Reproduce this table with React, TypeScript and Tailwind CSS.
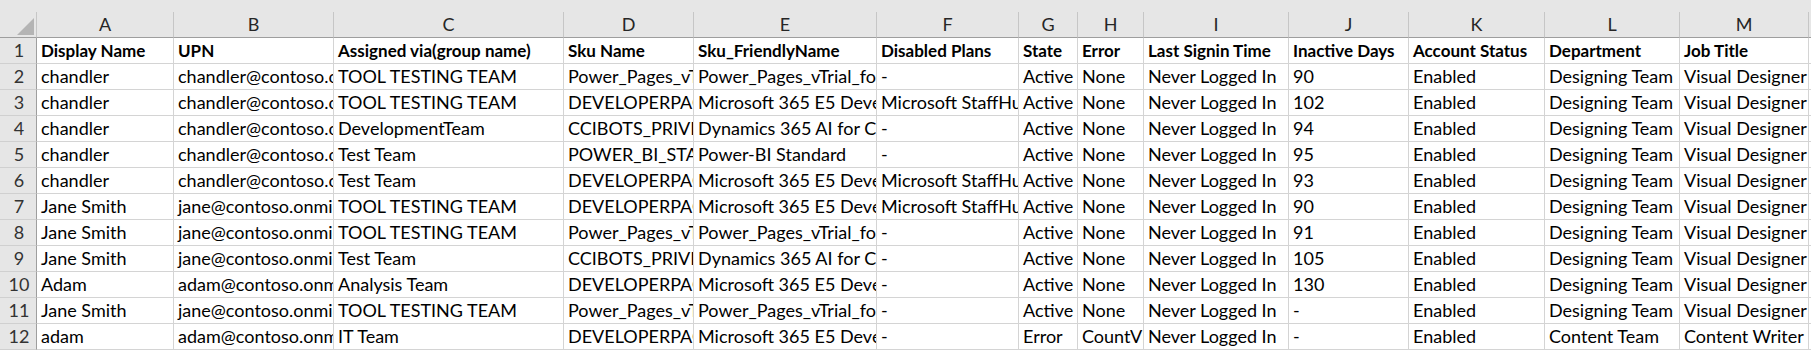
const LETTERS = ['A', 'B', 'C', 'D', 'E', 'F', 'G', 'H', 'I', 'J', 'K', 'L', 'M']

const HEADERS = [
  'Display Name',
  'UPN',
  'Assigned via(group name)',
  'Sku Name',
  'Sku_FriendlyName',
  'Disabled Plans',
  'State',
  'Error',
  'Last Signin Time',
  'Inactive Days',
  'Account Status',
  'Department',
  'Job Title',
]

const PAGES = 'Power_Pages_vTrial_for_Makers'
const DEV = 'DEVELOPERPACK_E5'
const DEV_NAME = 'Microsoft 365 E5 Developer (without Windows and Audio Conferencing)'
const BOTS = 'CCIBOTS_PRIVPREV_VIRAL'
const BOTS_NAME = 'Dynamics 365 AI for Customer Service Virtual Agents Viral'
const STAFFHUB = 'Microsoft StaffHub'
const CHANDLER = 'chandler@contoso.onmicrosoft.com'
const JANE = 'jane@contoso.onmicrosoft.com'
const ADAM = 'adam@contoso.onmicrosoft.com'
const NEVER = 'Never Logged In'

const ROWS: string[][] = [
  ['chandler', CHANDLER, 'TOOL TESTING TEAM', PAGES, PAGES, '-', 'Active', 'None', NEVER, '90', 'Enabled', 'Designing Team', 'Visual Designer'],
  ['chandler', CHANDLER, 'TOOL TESTING TEAM', DEV, DEV_NAME, STAFFHUB, 'Active', 'None', NEVER, '102', 'Enabled', 'Designing Team', 'Visual Designer'],
  ['chandler', CHANDLER, 'DevelopmentTeam', BOTS, BOTS_NAME, '-', 'Active', 'None', NEVER, '94', 'Enabled', 'Designing Team', 'Visual Designer'],
  ['chandler', CHANDLER, 'Test Team', 'POWER_BI_STANDARD', 'Power-BI Standard', '-', 'Active', 'None', NEVER, '95', 'Enabled', 'Designing Team', 'Visual Designer'],
  ['chandler', CHANDLER, 'Test Team', DEV, DEV_NAME, STAFFHUB, 'Active', 'None', NEVER, '93', 'Enabled', 'Designing Team', 'Visual Designer'],
  ['Jane Smith', JANE, 'TOOL TESTING TEAM', DEV, DEV_NAME, STAFFHUB, 'Active', 'None', NEVER, '90', 'Enabled', 'Designing Team', 'Visual Designer'],
  ['Jane Smith', JANE, 'TOOL TESTING TEAM', PAGES, PAGES, '-', 'Active', 'None', NEVER, '91', 'Enabled', 'Designing Team', 'Visual Designer'],
  ['Jane Smith', JANE, 'Test Team', BOTS, BOTS_NAME, '-', 'Active', 'None', NEVER, '105', 'Enabled', 'Designing Team', 'Visual Designer'],
  ['Adam', ADAM, 'Analysis Team', DEV, DEV_NAME, '-', 'Active', 'None', NEVER, '130', 'Enabled', 'Designing Team', 'Visual Designer'],
  ['Jane Smith', JANE, 'TOOL TESTING TEAM', PAGES, PAGES, '-', 'Active', 'None', NEVER, '-', 'Enabled', 'Designing Team', 'Visual Designer'],
  ['adam', ADAM, 'IT Team', DEV, DEV_NAME, '-', 'Error', 'CountViolation', NEVER, '-', 'Enabled', 'Content Team', 'Content Writer'],
]

// Excel clips text at the gridline unless the cell to the right is empty (col M here)
function Cell({ text, bold, last }: { text: string; bold?: boolean; last?: boolean }) {
  return (
    <div
      className={
        'h-[26px] border-r border-b border-[#d4d4d4] pl-[4px] leading-[25px] whitespace-nowrap ' +
        (last ? 'overflow-visible ' : 'overflow-hidden ') +
        (bold ? 'font-bold text-[17px]' : '')
      }
    >
      {text}
    </div>
  )
}

function RowHead({ n }: { n: number }) {
  return (
    <div className="h-[26px] bg-[#e6e6e6] border-r border-r-[#9e9e9e] border-b border-b-[#d0d0d0] pl-[2px] text-center leading-[25px] text-[#333]">
      {n}
    </div>
  )
}

export default function App() {
  return (
    <div className="w-[1811px] h-[350px] overflow-hidden bg-white font-['Lato',sans-serif] text-[18px] text-black">
      <div className="h-3 bg-[#e6e6e6]" />
      <div className="grid grid-cols-[37px_137px_160px_230px_130px_183px_142px_59px_66px_145px_120px_136px_135px_129px_1fr]">
        {/* corner */}
        <div className="h-[26px] bg-[#e6e6e6] border-r border-r-[#c6c6c6] border-b border-b-[#9e9e9e] flex items-end justify-end pr-[2px] pb-[2px]">
          <svg width="17" height="17" viewBox="0 0 17 17">
            <polygon points="0,17 17,0 17,17" fill="#b4b4b4" />
          </svg>
        </div>
        {LETTERS.map(l => (
          <div
            key={l}
            className="h-[26px] bg-[#e6e6e6] border-r border-r-[#c6c6c6] border-b border-b-[#9e9e9e] text-center leading-[25px] text-[#262626]"
          >
            {l}
          </div>
        ))}
        <div className="h-[26px] bg-[#e6e6e6] border-b border-b-[#9e9e9e]" />

        {/* row 1: column titles */}
        <RowHead n={1} />
        {HEADERS.map((h, i) => (
          <Cell key={h} text={h} bold last={i === HEADERS.length - 1} />
        ))}
        <div className="h-[26px] border-b border-[#d4d4d4]" />

        {ROWS.map((row, r) => (
          <div key={r} className="contents">
            <RowHead n={r + 2} />
            {row.map((v, i) => (
              <Cell key={i} text={v} last={i === row.length - 1} />
            ))}
            <div className="h-[26px] border-b border-[#d4d4d4]" />
          </div>
        ))}
      </div>
    </div>
  )
}
